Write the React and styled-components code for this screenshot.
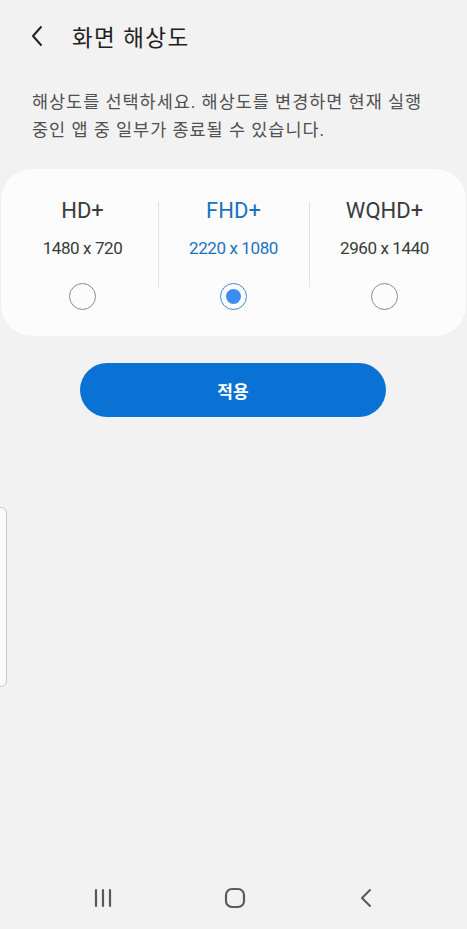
import React, { useState } from 'react';
import styled, { createGlobalStyle } from 'styled-components';

const GlobalStyle = createGlobalStyle`
  html, body {
    margin: 0;
    padding: 0;
    background: #f2f2f2;
  }
  body {
    font-family: Roboto, "Noto Sans CJK KR", "Noto Sans", sans-serif;
  }
`;

const Screen = styled.div`
  position: relative;
  width: 467px;
  height: 929px;
  background: #f2f2f2;
  display: flex;
  flex-direction: column;
  overflow: hidden;
`;

const Header = styled.div`
  display: flex;
  align-items: center;
  height: 72px;
  padding: 0 0 0 30px;
  gap: 22px;
`;

const BackButton = styled.button`
  border: none;
  background: none;
  padding: 0;
  width: 20px;
  height: 24px;
  display: flex;
  align-items: center;
  cursor: pointer;
`;

const Title = styled.h1`
  margin: 0;
  font-size: 22.5px;
  font-weight: 400;
  color: #1f1f1f;
  letter-spacing: 1.4px;
`;

const Description = styled.p`
  margin: 16px 30px 0 32px;
  font-size: 17.5px;
  line-height: 28px;
  color: #505050;
  letter-spacing: 0.95px;
`;

const Card = styled.div`
  margin: 25px 1px 0;
  height: 167px;
  background: #fcfcfc;
  border-radius: 30px;
  box-shadow: 0 0 1px rgba(0, 0, 0, 0.08);
  display: grid;
  grid-template-columns: repeat(3, 1fr);
  padding: 0 6px;
`;

const Option = styled.label`
  position: relative;
  display: flex;
  flex-direction: column;
  align-items: center;
  padding-top: 29px;
  cursor: pointer;

  & + &::before {
    content: '';
    position: absolute;
    left: 0;
    top: 33px;
    height: 85px;
    width: 1px;
    background: #e2e2e2;
  }
`;

const OptionName = styled.div`
  font-size: 22px;
  line-height: 26px;
  color: ${p => (p.$active ? '#1b72bf' : '#3a3a3a')};
`;

const OptionRes = styled.div`
  margin-top: 14px;
  font-size: 17px;
  line-height: 20px;
  letter-spacing: -0.4px;
  color: ${p => (p.$active ? '#1b72bf' : '#3a3a3a')};
`;

const Radio = styled.span`
  margin-top: 25px;
  width: 25px;
  height: 25px;
  border-radius: 50%;
  border: 1px solid ${p => (p.$active ? '#3c86dc' : '#8a8a8a')};
  display: flex;
  align-items: center;
  justify-content: center;

  &::after {
    content: '';
    width: 15px;
    height: 15px;
    border-radius: 50%;
    background: ${p => (p.$active ? '#3d8cf0' : 'transparent')};
  }
`;

const ApplyButton = styled.button`
  align-self: center;
  margin: 27px 0 0 -1px;
  width: 306px;
  height: 54px;
  border: none;
  border-radius: 27px;
  background: #0b72d5;
  color: #ffffff;
  font-family: Roboto, "Noto Sans CJK KR", sans-serif;
  font-size: 17px;
  font-weight: 700;
  cursor: pointer;
`;

const EdgeHandle = styled.div`
  position: absolute;
  left: -6px;
  top: 507px;
  width: 11px;
  height: 178px;
  background: #fafafa;
  border: 1px solid #c8c8c8;
  border-radius: 6px;
`;

const NavBar = styled.div`
  margin-top: auto;
  height: 62px;
  display: grid;
  grid-template-columns: 1fr 1fr 1fr;
  align-items: center;
  padding: 0 36px 0 38px;
`;

const NavItem = styled.div`
  display: flex;
  justify-content: center;
  align-items: center;
`;

const options = [
  { name: 'HD+', res: '1480 x 720' },
  { name: 'FHD+', res: '2220 x 1080' },
  { name: 'WQHD+', res: '2960 x 1440' },
];

export default function App() {
  const [selected, setSelected] = useState(1);

  return (
    <Screen>
      <GlobalStyle />
      <Header>
        <BackButton aria-label="back">
          <svg width="14" height="22" viewBox="0 0 14 22">
            <path d="M11 2 L3 11 L11 20" fill="none" stroke="#222" strokeWidth="2" strokeLinecap="round" strokeLinejoin="round" />
          </svg>
        </BackButton>
        <Title>화면 해상도</Title>
      </Header>
      <Description>
        해상도를 선택하세요. 해상도를 변경하면 현재 실행 중인 앱 중 일부가 종료될 수 있습니다.
      </Description>
      <Card>
        {options.map((o, i) => (
          <Option key={o.name} onClick={() => setSelected(i)}>
            <OptionName $active={selected === i}>{o.name}</OptionName>
            <OptionRes $active={selected === i}>{o.res}</OptionRes>
            <Radio $active={selected === i} />
          </Option>
        ))}
      </Card>
      <ApplyButton>적용</ApplyButton>
      <EdgeHandle />
      <NavBar>
        <NavItem>
          <svg width="22" height="20" viewBox="0 0 22 20">
            <g stroke="#5a5a5a" strokeWidth="2.2" strokeLinecap="round">
              <line x1="3" y1="2" x2="3" y2="18" />
              <line x1="10" y1="2" x2="10" y2="18" />
              <line x1="17" y1="2" x2="17" y2="18" />
            </g>
          </svg>
        </NavItem>
        <NavItem>
          <svg width="22" height="22" viewBox="0 0 22 22">
            <rect x="2" y="2" width="18" height="18" rx="6" fill="none" stroke="#5a5a5a" strokeWidth="2.2" />
          </svg>
        </NavItem>
        <NavItem>
          <svg width="16" height="22" viewBox="0 0 16 22">
            <path d="M12 3 L4 11 L12 19" fill="none" stroke="#5a5a5a" strokeWidth="2" strokeLinecap="round" strokeLinejoin="round" />
          </svg>
        </NavItem>
      </NavBar>
    </Screen>
  );
}
